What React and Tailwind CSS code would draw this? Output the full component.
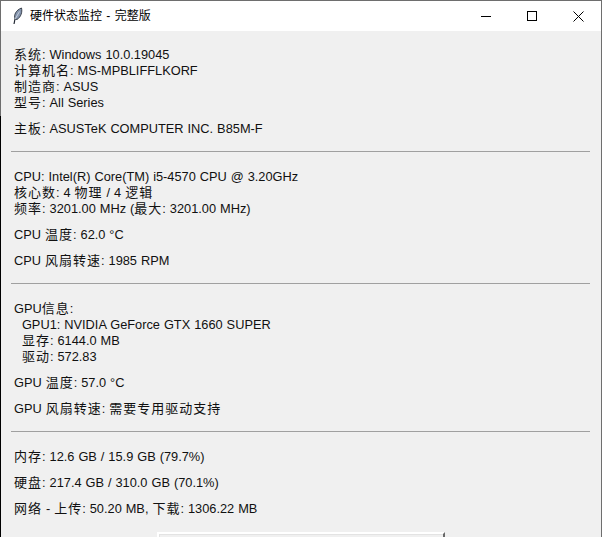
const font = "font-['Liberation_Sans','Noto_Sans_CJK_SC',sans-serif]";

// cjk runs sit a bit wider than the latin text, as in the native window
function Line({ text }) {
  const parts = text.split(/([\u4e00-\u9fff]+)/);
  return (
    <p className="h-4 leading-4 whitespace-pre">
      {parts.map((part, i) =>
        i % 2 === 1 ? (
          <span key={i} className="text-[13px] tracking-[1px]">{part}</span>
        ) : (
          <span key={i}>{part}</span>
        )
      )}
    </p>
  );
}

function Section({ groups }) {
  return (
    <div className="flex flex-col gap-[10px] px-[3px]">
      {groups.map((lines, i) => (
        <div key={i} className="flex flex-col">
          {lines.map((line, j) => (
            <Line key={j} text={line} />
          ))}
        </div>
      ))}
    </div>
  );
}

function Separator() {
  return <div className="h-px bg-[#a0a0a0] mt-[14px] mb-[17px]" />;
}

export default function App() {
  return (
    <div className="relative w-[602px] h-[537px] overflow-hidden">
      <div className={`h-full flex flex-col bg-[#f0f0f0] border-x border-t border-[#6e6e6e] text-[12.8px] [word-spacing:0.4px] text-[#111] ${font}`}>
        <div className="h-[30px] shrink-0 bg-white flex items-center text-[12px]">
          <svg width="12" height="18" viewBox="0 0 12 18" className="ml-[11px]">
            <path d="M2 17 L3 12" stroke="#1f2530" strokeWidth="1.2" fill="none" />
            <path d="M3 12 C1.5 8 4 3 9.5 1 C10.5 5 9 10 5 12.5 Z" fill="#8494ad" stroke="#2c3440" strokeWidth="0.9" />
            <path d="M3.2 12 L7.5 4.5" stroke="#d5dce6" strokeWidth="0.8" fill="none" />
          </svg>
          <span className="ml-[6px] text-black [word-spacing:1px]">硬件状态监控 - 完整版</span>
          <div className="ml-auto flex items-center">
            <div className="w-[46px] flex justify-center"><div className="w-[10px] h-px bg-black" /></div>
            <div className="w-[46px] flex justify-center"><div className="w-[10px] h-[10px] border border-black" /></div>
            <div className="w-[46px] flex justify-center">
              <svg width="11" height="11" viewBox="0 0 11 11"><path d="M0.5 0.5 L10.5 10.5 M10.5 0.5 L0.5 10.5" stroke="#000" strokeWidth="1" /></svg>
            </div>
          </div>
        </div>
        <div className="flex-1 pl-[10px] pr-[11px] pt-[16px]">
          <Section groups={[["系统: Windows 10.0.19045", "计算机名: MS-MPBLIFFLKORF", "制造商: ASUS", "型号: All Series"], ["主板: ASUSTeK COMPUTER INC. B85M-F"]]} />
          <Separator />
          <Section groups={[["CPU: Intel(R) Core(TM) i5-4570 CPU @ 3.20GHz", "核心数: 4 物理 / 4 逻辑", "频率: 3201.00 MHz (最大: 3201.00 MHz)"], ["CPU 温度: 62.0 °C"], ["CPU 风扇转速: 1985 RPM"]]} />
          <Separator />
          <Section groups={[["GPU信息:", "  GPU1: NVIDIA GeForce GTX 1660 SUPER", "  显存: 6144.0 MB", "  驱动: 572.83"], ["GPU 温度: 57.0 °C"], ["GPU 风扇转速: 需要专用驱动支持"]]} />
          <Separator />
          <Section groups={[["内存: 12.6 GB / 15.9 GB (79.7%)"], ["硬盘: 217.4 GB / 310.0 GB (70.1%)"], ["网络 - 上传: 50.20 MB, 下载: 1306.22 MB"]]} />
          <div className="w-[288px] h-[20px] ml-[146px] mt-[15px] border-t-2 border-l-2 border-r-2 border-t-white border-l-white border-r-[#696969]">
            <div className="h-full border-t border-l border-[#e3e3e3]" />
          </div>
        </div>
      </div>
      {/* dark edge of whatever sits behind the window */}
      <div className="absolute left-0 top-[116px] bottom-0 w-px bg-black" />
    </div>
  );
}
